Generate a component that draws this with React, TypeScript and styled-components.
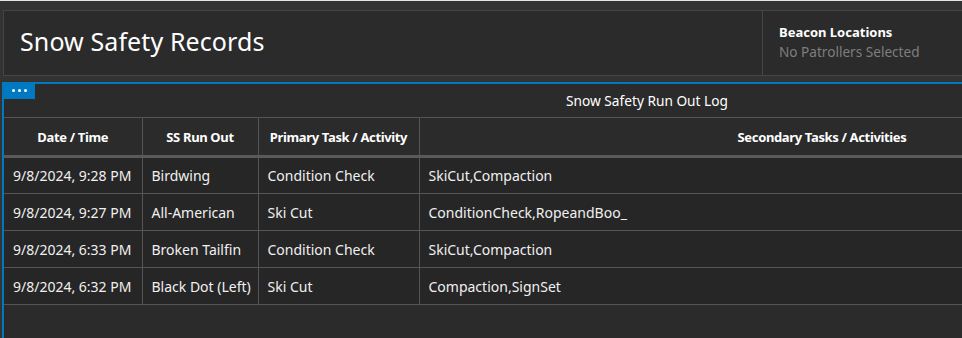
import React from "react";
import styled, { createGlobalStyle } from "styled-components";

const GlobalStyle = createGlobalStyle`
  html, body {
    margin: 0;
    padding: 0;
    overflow: hidden;
    background: #333333;
  }
  body {
    font-family: "Noto Sans", "Open Sans", sans-serif;
    color: #ffffff;
  }
`;

const Frame = styled.div`
  width: 1290px;
  height: 338px;
  border-top: 1px solid #e4e4e4;
  background: #333333;
  padding: 9px 0 0 3px;
  box-sizing: border-box;
  display: flex;
  flex-direction: column;
  gap: 6px;
`;

const Header = styled.header`
  display: flex;
  height: 66px;
  border: 1px solid #454545;
  border-right: none;
  background: #2b2b2b;
  box-sizing: border-box;
`;

const TitleBox = styled.div`
  width: 759px;
  display: flex;
  align-items: center;
  padding: 0 0 4px 16px;
  box-sizing: border-box;
  border-right: 1px solid #454545;
`;

const Title = styled.h1`
  margin: 0;
  font-size: 25px;
  font-weight: 400;
  letter-spacing: 0.1px;
`;

const Beacon = styled.div`
  flex: 1;
  padding: 12px 0 0 16px;
  display: flex;
  flex-direction: column;
  gap: 1px;
`;

const BeaconTitle = styled.div`
  font-size: 13px;
  font-weight: 700;
`;

const BeaconSub = styled.div`
  font-size: 13.6px;
  color: #7e7e7e;
`;

const Panel = styled.section`
  position: relative;
  flex: 1;
  margin-left: -1px;
  border-top: 2px solid #0079c1;
  border-left: 2px solid #0079c1;
  background: #2b2b2b;
`;

const Tab = styled.div`
  position: absolute;
  left: -2px;
  top: 0;
  width: 33px;
  height: 15px;
  background: #0079c1;
  display: flex;
  gap: 3px;
  align-items: center;
  padding: 0 0 2px 10px;
  box-sizing: border-box;
`;

const Dot = styled.span`
  width: 3px;
  height: 3px;
  border-radius: 50%;
  background: #ffffff;
`;

const Caption = styled.div`
  height: 33px;
  display: flex;
  align-items: center;
  justify-content: center;
  width: 1286px;
  font-size: 13.7px;
  padding-bottom: 1px;
  box-sizing: border-box;
`;

const Table = styled.table`
  border-collapse: collapse;
  table-layout: fixed;
  width: 1221px;
`;

const Th = styled.th<{ w: number }>`
  width: ${(p) => p.w}px;
  height: 39px;
  padding: 0 4px;
  font-size: 13px;
  font-weight: 700;
  letter-spacing: -0.35px;
  white-space: nowrap;
  text-align: center;
  background: #2b2b2b;
  border: 1px solid #555555;
  border-bottom: 3px solid #5a5a5a;
  box-sizing: border-box;
  &:first-child {
    border-left: none;
  }
`;

const Td = styled.td`
  height: 37px;
  padding: 0 9px;
  font-size: 14px;
  color: #f0f0f0;
  background: #262626;
  border: 1px solid #555555;
  white-space: nowrap;
  overflow: hidden;
  box-sizing: border-box;
  &:first-child {
    border-left: none;
  }
`;

const columns = [
  { label: "Date / Time", w: 138 },
  { label: "SS Run Out", w: 116 },
  { label: "Primary Task / Activity", w: 161 },
  { label: "Secondary Tasks / Activities", w: 806 },
];

const rows = [
  ["9/8/2024, 9:28 PM", "Birdwing", "Condition Check", "SkiCut,Compaction"],
  ["9/8/2024, 9:27 PM", "All-American", "Ski Cut", "ConditionCheck,RopeandBoo_"],
  ["9/8/2024, 6:33 PM", "Broken Tailfin", "Condition Check", "SkiCut,Compaction"],
  ["9/8/2024, 6:32 PM", "Black Dot (Left)", "Ski Cut", "Compaction,SignSet"],
];

export default function App() {
  return (
    <>
      <GlobalStyle />
      <Frame>
        <Header>
          <TitleBox>
            <Title>Snow Safety Records</Title>
          </TitleBox>
          <Beacon>
            <BeaconTitle>Beacon Locations</BeaconTitle>
            <BeaconSub>No Patrollers Selected</BeaconSub>
          </Beacon>
        </Header>
        <Panel>
          <Tab>
            <Dot />
            <Dot />
            <Dot />
          </Tab>
          <Caption>Snow Safety Run Out Log</Caption>
          <Table>
            <thead>
              <tr>
                {columns.map((c) => (
                  <Th key={c.label} w={c.w}>
                    {c.label}
                  </Th>
                ))}
              </tr>
            </thead>
            <tbody>
              {rows.map((r) => (
                <tr key={r[0]}>
                  {r.map((cell, i) => (
                    <Td key={i}>{cell}</Td>
                  ))}
                </tr>
              ))}
            </tbody>
          </Table>
        </Panel>
      </Frame>
    </>
  );
}
